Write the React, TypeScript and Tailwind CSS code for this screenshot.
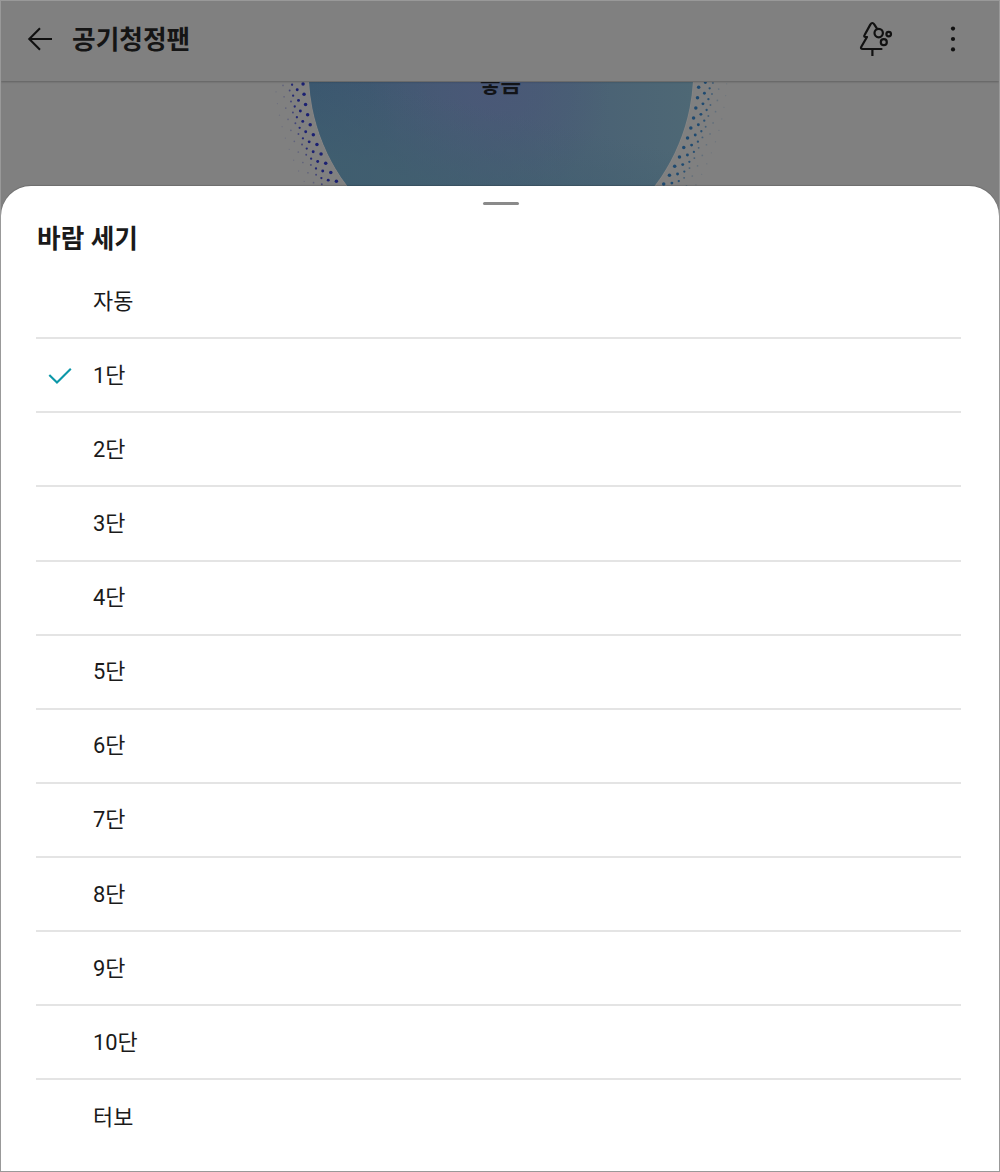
const levels = ['자동', '1단', '2단', '3단', '4단', '5단', '6단', '7단', '8단', '9단', '10단', '터보'];

const cx = 501;
const cy = 70.4;

const rings = [
  { r: 198.4, size: 1.75, shift: 0, opacity: 1 },
  { r: 204.7, size: 1.45, shift: 1.5, opacity: 1 },
  { r: 209.4, size: 1.15, shift: 0, opacity: 0.9 },
  { r: 212.3, size: 0.95, shift: 1.5, opacity: 0.6 },
  { r: 218.5, size: 0.85, shift: 0, opacity: 0.3 },
  { r: 226, size: 0.65, shift: 1.5, opacity: 0.18 },
];

function DotHalo({ side }: { side: 'left' | 'right' }) {
  const sign = side === 'left' ? -1 : 1;
  const start = side === 'left' ? 0.93 : 1.9;
  const fill = side === 'left' ? '#1b2072' : '#1f4a70';
  return (
    <g fill={fill}>
      {rings.map((ring) =>
        Array.from({ length: 12 }, (_, i) => {
          const a = ((start + ring.shift + i * 3) * Math.PI) / 180;
          return (
            <circle
              key={`${ring.r}-${i}`}
              cx={cx + sign * ring.r * Math.cos(a)}
              cy={cy + ring.r * Math.sin(a)}
              r={ring.size}
              opacity={ring.opacity}
            />
          );
        }),
      )}
    </g>
  );
}

function AirQualityDial() {
  return (
    <svg className="block" width="998" height="120" viewBox="1 82 998 120">
      <defs>
        <linearGradient id="dial" gradientUnits="userSpaceOnUse" x1="309" y1="120" x2="693" y2="120">
          <stop offset="0" stopColor="#3a566f" />
          <stop offset="0.45" stopColor="#465b74" />
          <stop offset="1" stopColor="#4e6875" />
        </linearGradient>
        <radialGradient id="violet" gradientUnits="userSpaceOnUse" cx="490" cy="85" r="120">
          <stop offset="0" stopColor="#4a5877" />
          <stop offset="1" stopColor="#4a5877" stopOpacity="0" />
        </radialGradient>
        <linearGradient id="teal" gradientUnits="userSpaceOnUse" x1="500" y1="110" x2="480" y2="195">
          <stop offset="0" stopColor="#41606f" stopOpacity="0" />
          <stop offset="1" stopColor="#41606f" stopOpacity="0.75" />
        </linearGradient>
      </defs>
      <circle cx={cx} cy={cy} r="193" fill="#868686" />
      <circle cx={cx} cy={cy} r="192.3" fill="url(#dial)" />
      <circle cx={cx} cy={cy} r="192.3" fill="url(#violet)" />
      <circle cx={cx} cy={cy} r="192.3" fill="url(#teal)" />
      <DotHalo side="left" />
      <DotHalo side="right" />
    </svg>
  );
}

function Header() {
  return (
    <header className="relative z-10 flex h-20 shrink-0 items-center bg-[#808080] shadow-[0_1px_2px_rgba(0,0,0,0.25)]">
      <svg className="ml-[26px] -mt-1" width="26" height="26" viewBox="0 0 26 26" fill="none" stroke="#101010" strokeWidth="2.1">
        <path d="M25 13H2.5M13 2.3 2.3 13 13 23.7" />
      </svg>
      <h1 className="-mt-0.5 ml-[19px] text-[25.7px] leading-9 font-bold text-[#151515]">공기청정팬</h1>
      <svg className="-mt-1 ml-auto" width="36" height="38" viewBox="858 20 36 38" fill="none" stroke="#111" strokeWidth="2.2" strokeLinecap="round" strokeLinejoin="round">
        <path d="M881.5 49H862.8Q860.2 49 861.3 46.8L867 37H865.6Q863.5 36.8 864.6 35L870.3 24.6Q872.3 21.4 874.4 24.6L877 28.6" />
        <path d="M872.4 49V56" strokeLinecap="butt" />
        <circle cx="878.7" cy="33.1" r="4.2" />
        <circle cx="888.7" cy="34.1" r="2.3" />
        <circle cx="883.8" cy="42.2" r="3" />
      </svg>
      <svg className="-mt-1 mr-[41px] ml-[54px]" width="10" height="30" viewBox="0 0 10 30" fill="#111">
        <circle cx="5" cy="4.6" r="2.1" />
        <circle cx="5" cy="15" r="2.1" />
        <circle cx="5" cy="25.4" r="2.1" />
      </svg>
    </header>
  );
}

export default function App() {
  return (
    <div className="flex h-[1172px] w-[1000px] flex-col overflow-hidden border border-[#999] bg-[#808080] font-['Roboto','Noto_Sans_CJK_KR',sans-serif] text-[#1a1a1a]">
      <Header />
      <div className="relative h-[104.5px] shrink-0 pt-px">
        <AirQualityDial />
        <div className="absolute inset-x-0 top-px h-8 overflow-hidden">
          <span className="absolute -top-[14px] left-[479px] text-[22.3px] leading-8 font-bold text-[#121418]">좋음</span>
        </div>
      </div>
      <main className="relative flex grow flex-col rounded-t-[30px] bg-white pr-[38px] pl-[35px] shadow-[0_-1px_1px_rgba(0,0,0,0.15)]">
        <div className="mt-[16.5px] h-[3px] w-9 shrink-0 translate-x-0.5 self-center rounded-sm bg-[#8a8a8a]" />
        <h2 className="mt-4 pl-px text-[25.7px] leading-9 font-bold">바람 세기</h2>
        <ul className="mt-2">
          {levels.map((level) => (
            <li key={level} className="flex h-[74.13px] items-center border-b-2 border-[#e4e4e4] last:border-b-0">
              <span className="flex w-[57px] pt-0.5 pl-3">
                {level === '1단' && (
                  <svg width="24" height="18" viewBox="0 0 24 18" fill="none" stroke="#0b97a8" strokeWidth="2.1">
                    <path d="M1.3 7.9 9 15.6 22.8 1.8" />
                  </svg>
                )}
              </span>
              <span className="pt-px text-[21.9px] leading-8">{level}</span>
            </li>
          ))}
        </ul>
      </main>
    </div>
  );
}
